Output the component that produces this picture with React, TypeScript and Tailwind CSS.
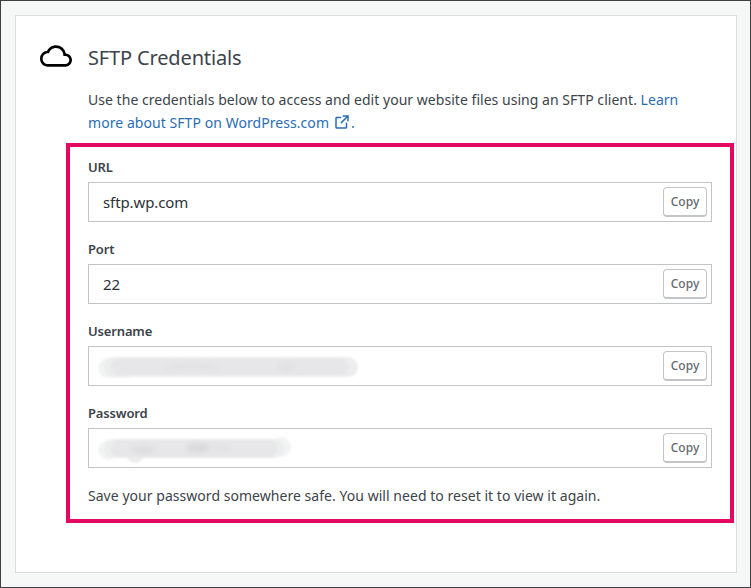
import type { ReactNode } from "react";

type FieldProps = {
  label: string;
  children: ReactNode;
};

const CloudIcon = () => {
  return (
    <svg className="h-8 w-8 shrink-0" viewBox="0 0 24 24" fill="#000">
      <path d="M19.35 10.04A7.49 7.49 0 0 0 12 4C9.11 4 6.6 5.64 5.35 8.04A5.994 5.994 0 0 0 0 14c0 3.31 2.69 6 6 6h13c2.76 0 5-2.24 5-5 0-2.64-2.05-4.78-4.65-4.96zM19 18H6c-2.21 0-4-1.79-4-4s1.79-4 4-4h.71C7.37 7.69 9.48 6 12 6c3.04 0 5.5 2.46 5.5 5.5v.5H19c1.66 0 3 1.34 3 3s-1.34 3-3 3z" />
    </svg>
  );
};

const ExternalIcon = () => {
  return (
    <svg className="-mt-[2px] ml-1 h-[18px] w-[18px] shrink-0" viewBox="0 0 24 24" fill="#2a6db3">
      <path d="M19 13v6c0 1.105-.895 2-2 2H5c-1.105 0-2-.895-2-2V7c0-1.105.895-2 2-2h6v2H5v12h12v-6h2zM13 3v2h4.586l-7.793 7.793 1.414 1.414L19 6.414V11h2V3h-8z" />
    </svg>
  );
};

// smudges that hide the private values
const UsernameSmudge = () => {
  return (
    <svg className="-ml-[6px] h-[38px] w-[264px]" viewBox="0 0 264 38">
      <g className="blur-[1.2px]">
        <rect x="1" y="11" width="40" height="20" rx="10" fill="#f2f3f3" />
        <rect x="7" y="10" width="254" height="20" rx="10" fill="#ededee" />
        <rect x="14" y="12" width="238" height="16" rx="8" fill="#e7e7e9" />
      </g>
      <g className="blur-[2px]" fill="#dededf">
        <ellipse cx="95" cy="20" rx="28" ry="3" opacity=".5" />
        <ellipse cx="190" cy="20" rx="9" ry="4" opacity=".8" />
      </g>
    </svg>
  );
};

const PasswordSmudge = () => {
  return (
    <svg className="-ml-[6px] h-[38px] w-[196px]" viewBox="0 0 196 38">
      <g className="blur-[1.2px]">
        <circle cx="11" cy="21" r="10" fill="#f2f3f3" />
        <circle cx="184" cy="18" r="10" fill="#f2f3f3" />
        <circle cx="38" cy="25" r="9" fill="#ededee" />
        <rect x="7" y="10" width="180" height="19" rx="9.5" fill="#ededee" />
        <rect x="14" y="11" width="166" height="17" rx="8" fill="#e7e7e9" />
      </g>
      <g className="blur-[2px]" fill="#d9d9db">
        <ellipse cx="46" cy="21" rx="12" ry="4" opacity=".6" />
        <ellipse cx="101" cy="19" rx="12" ry="5" opacity=".9" />
        <ellipse cx="125" cy="19" rx="10" ry="3" opacity=".4" />
      </g>
    </svg>
  );
};

const Field = ({ label, children }: FieldProps) => {
  return (
    <div className="h-[82px]">
      <label className="block h-[35px] pt-[10px] text-[13px] leading-5 font-semibold tracking-[-0.15px] text-[#3c434a]">
        {label}
      </label>
      <div className="flex h-10 items-center justify-between border border-[#c3c4c7] bg-white pr-1 pl-[14px] text-[15px] tracking-[-0.1px] text-[#2c3338]">
        {children}
        <button
          type="button"
          className="flex h-[30px] w-[44px] items-center justify-center rounded border border-b-2 border-[#c3c4c7] bg-white text-[12px] font-medium tracking-normal text-[#646970]"
        >
          Copy
        </button>
      </div>
    </div>
  );
};

const App = () => {
  return (
    <div className="h-[588px] w-[751px] border border-[#3f3f41] bg-[#f6f7f7] p-[14px] pr-[13px] font-['Noto_Sans',sans-serif] whitespace-nowrap text-[#3c434a]">
      <div className="h-[558px] w-[722px] border border-[#dcdcde] bg-white pt-6">
        <div className="flex h-8 items-center gap-4 pl-6">
          <CloudIcon />
          <h1 className="pt-[3px] text-[20px] leading-8 tracking-[-0.15px]">SFTP Credentials</h1>
        </div>
        <div className="mt-4 h-[55px] pl-[72px] text-[14px] leading-[23px] tracking-[0.035px]">
          <p>
            Use the credentials below to access and edit your website files using an SFTP client.{" "}
            <span className="text-[#2a6db3]">Learn</span>
          </p>
          <p className="flex items-center text-[#2a6db3]">
            <span className="tracking-[0.06px]">more about SFTP on WordPress.com</span>
            <ExternalIcon />
            <span>.</span>
          </p>
        </div>
        <div className="ml-[50px] h-[380px] w-[668px] border-4 border-[#e30861] px-[18px]">
          <Field label="URL">
            <span>sftp.wp.com</span>
          </Field>
          <Field label="Port">
            <span>22</span>
          </Field>
          <Field label="Username">
            <UsernameSmudge />
          </Field>
          <Field label="Password">
            <PasswordSmudge />
          </Field>
          <p className="pt-[9px] text-[14px] leading-[23px] tracking-[0.04px]">
            Save your password somewhere safe. You will need to reset it to view it again.
          </p>
        </div>
      </div>
    </div>
  );
};

export default App;
